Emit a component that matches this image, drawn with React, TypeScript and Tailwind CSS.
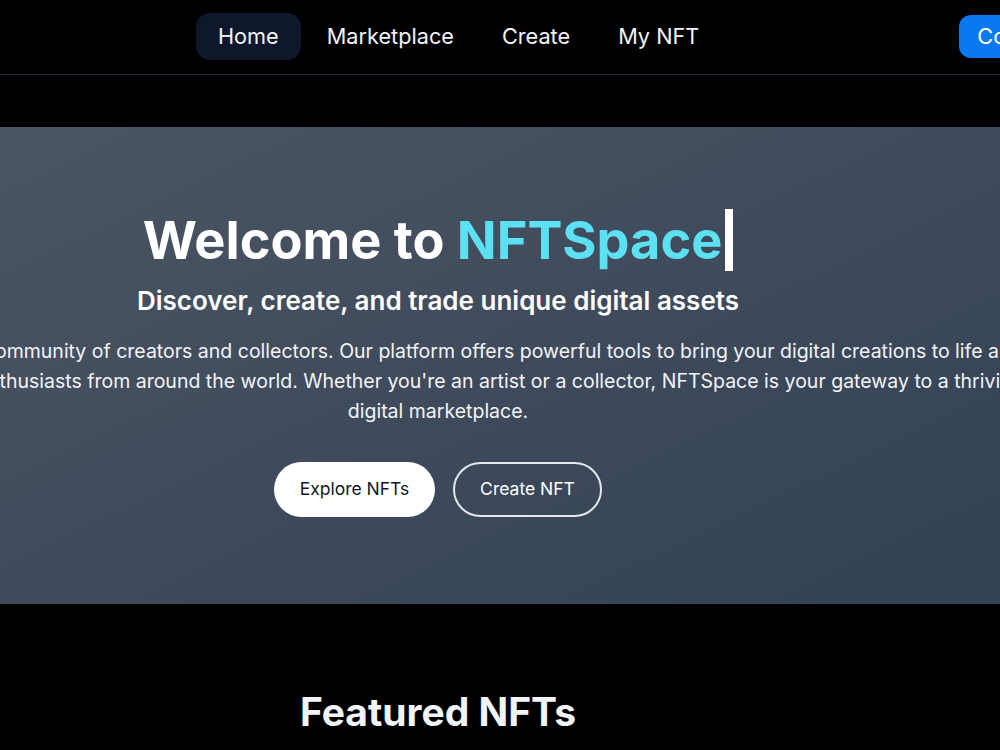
import React from "react";

const font = { fontFamily: "Inter, 'Liberation Sans', sans-serif" };

function NavBar() {
  const links = ["Home", "Marketplace", "Create", "My NFT"];
  return (
    <header className="h-[75px] border-b border-[#1e293b] bg-black">
      <div className="flex h-[73px] items-center">
        <nav className="ml-[196px] flex shrink-0 items-center gap-[4px]">
          {links.map((l, i) => (
            <a
              key={l}
              className={`whitespace-nowrap rounded-[14px] px-[22px] py-[9px] text-[21.7px] leading-[29px] text-[#f1f5f9] ${
                i === 0 ? "bg-[#0f172a]" : ""
              }`}
            >
              {l}
            </a>
          ))}
        </nav>
        <button className="ml-[238px] h-[43px] shrink-0 whitespace-nowrap rounded-[12px] bg-[#0a78f0] px-[18px] text-[21.7px] text-white">
          Connect Wallet
        </button>
      </div>
    </header>
  );
}

function Hero() {
  return (
    <section className="mt-[52px] h-[477px] bg-gradient-to-br from-[#4b5563] to-[#334155]">
      <div className="flex w-[876px] flex-col items-center pt-[82px]">
        <h1 className="flex items-center text-[52.3px] font-bold leading-[62px] text-white">
          <span className="whitespace-nowrap">
            Welcome to <span className="text-[#5ce1f2]">NFTSpace</span>
          </span>
          <span className="ml-[3px] h-[62px] w-[8px] bg-white" />
        </h1>
        <h2 className="mt-[13px] whitespace-nowrap text-[26px] font-semibold leading-[34px] text-white">
          Discover, create, and trade unique digital assets
        </h2>
        <p className="mt-[18px] w-[1190px] shrink-0 text-center text-[19.5px] leading-[30px] text-[#f3f4f6]">
          Join a vibrant community of creators and collectors. Our platform offers powerful tools to bring
          your digital creations to life and connect with enthusiasts from around the world. Whether you're an
          artist or a collector, NFTSpace is your gateway to a thriving digital marketplace.
        </p>
        <div className="mt-[36px] flex gap-[18px]">
          <button className="h-[55px] w-[161px] rounded-full bg-white text-[17.5px] text-[#111827]">
            Explore NFTs
          </button>
          <button className="h-[55px] w-[149px] rounded-full border-2 border-[#e5e7eb] text-[17.5px] text-white">
            Create NFT
          </button>
        </div>
      </div>
    </section>
  );
}

export default function App() {
  return (
    <div className="h-[750px] w-[1000px] overflow-hidden bg-black" style={font}>
      <NavBar />
      <Hero />
      <div className="flex w-[876px] justify-center pt-[84px]">
        <h2 className="text-[39px] font-bold leading-[48px] text-[#f1f5f9]">Featured NFTs</h2>
      </div>
    </div>
  );
}
